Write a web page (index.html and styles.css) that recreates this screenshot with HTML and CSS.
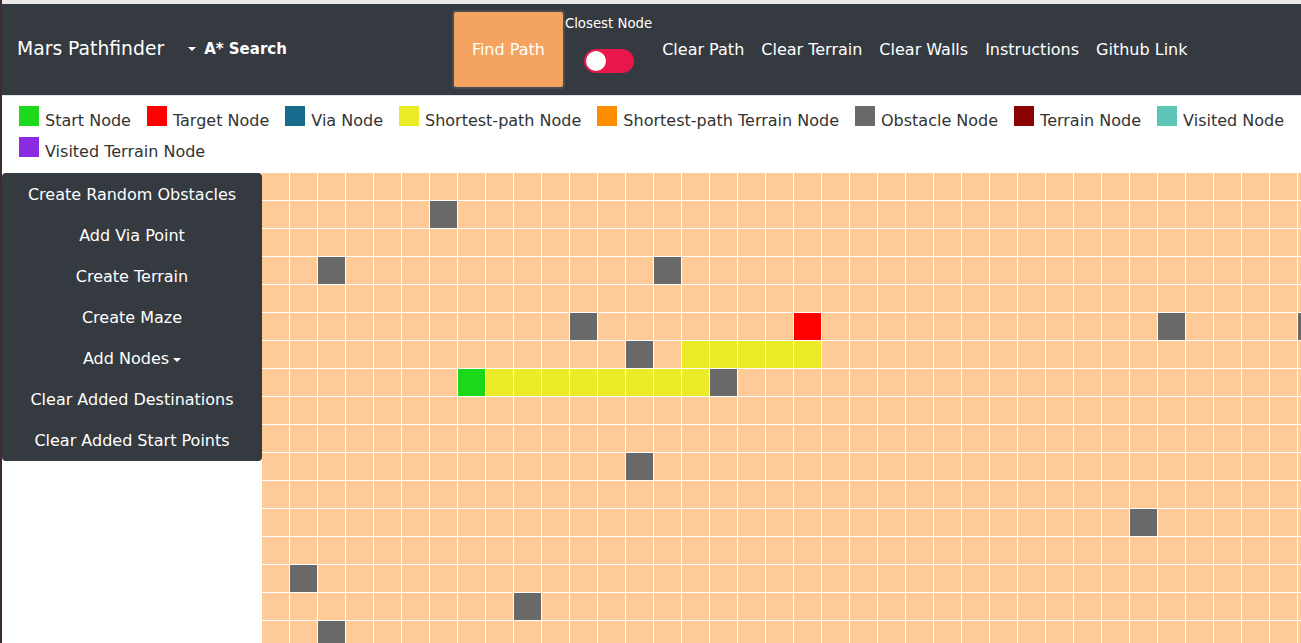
FILE: index.html
```html
<!DOCTYPE html>
<html lang="en">
<head>
<meta charset="utf-8">
<title>Mars Pathfinder</title>
<link rel="stylesheet" href="styles.css">
</head>
<body>
<div class="topbar"></div>
<nav class="navbar">
  <span class="brand">Mars Pathfinder</span>
  <div class="algo"><span class="caret"></span><span class="algo-label">A* Search</span></div>
  <button class="find-btn">Find Path</button>
  <div class="closest">
    <span class="closest-label">Closest Node</span>
    <span class="toggle"><span class="knob"></span></span>
  </div>
  <div class="links">
    <a class="link">Clear Path</a>
    <a class="link">Clear Terrain</a>
    <a class="link">Clear Walls</a>
    <a class="link">Instructions</a>
    <a class="link">Github Link</a>
  </div>
</nav>
<div class="legend">
  <div class="legend-item"><span class="swatch sw-start"></span>Start Node</div>
  <div class="legend-item"><span class="swatch sw-target"></span>Target Node</div>
  <div class="legend-item"><span class="swatch sw-via"></span>Via Node</div>
  <div class="legend-item"><span class="swatch sw-path"></span>Shortest-path Node</div>
  <div class="legend-item"><span class="swatch sw-pterrain"></span>Shortest-path Terrain Node</div>
  <div class="legend-item"><span class="swatch sw-obstacle"></span>Obstacle Node</div>
  <div class="legend-item"><span class="swatch sw-terrain"></span>Terrain Node</div>
  <div class="legend-item"><span class="swatch sw-visited"></span>Visited Node</div>
  <div class="legend-item"><span class="swatch sw-vterrain"></span>Visited Terrain Node</div>
</div>
<div class="main">
  <div class="sidebar">
    <div class="side-item">Create Random Obstacles</div>
    <div class="side-item">Add Via Point</div>
    <div class="side-item">Create Terrain</div>
    <div class="side-item">Create Maze</div>
    <div class="side-item">Add Nodes<span class="caret small"></span></div>
    <div class="side-item">Clear Added Destinations</div>
    <div class="side-item">Clear Added Start Points</div>
  </div>
  <div class="grid">
    <!-- row 0 -->
    <span></span><span></span><span></span><span></span><span></span><span></span><span></span><span></span><span></span><span></span>
    <span></span><span></span><span></span><span></span><span></span><span></span><span></span><span></span><span></span><span></span>
    <span></span><span></span><span></span><span></span><span></span><span></span><span></span><span></span><span></span><span></span>
    <span></span><span></span><span></span><span></span><span></span><span></span><span></span><span></span>
    <!-- row 1: obstacle at 6 -->
    <span></span><span></span><span></span><span></span><span></span><span></span><span class="o"></span><span></span><span></span><span></span>
    <span></span><span></span><span></span><span></span><span></span><span></span><span></span><span></span><span></span><span></span>
    <span></span><span></span><span></span><span></span><span></span><span></span><span></span><span></span><span></span><span></span>
    <span></span><span></span><span></span><span></span><span></span><span></span><span></span><span></span>
    <!-- row 2 -->
    <span></span><span></span><span></span><span></span><span></span><span></span><span></span><span></span><span></span><span></span>
    <span></span><span></span><span></span><span></span><span></span><span></span><span></span><span></span><span></span><span></span>
    <span></span><span></span><span></span><span></span><span></span><span></span><span></span><span></span><span></span><span></span>
    <span></span><span></span><span></span><span></span><span></span><span></span><span></span><span></span>
    <!-- row 3: obstacles at 2, 14 -->
    <span></span><span></span><span class="o"></span><span></span><span></span><span></span><span></span><span></span><span></span><span></span>
    <span></span><span></span><span></span><span></span><span class="o"></span><span></span><span></span><span></span><span></span><span></span>
    <span></span><span></span><span></span><span></span><span></span><span></span><span></span><span></span><span></span><span></span>
    <span></span><span></span><span></span><span></span><span></span><span></span><span></span><span></span>
    <!-- row 4 -->
    <span></span><span></span><span></span><span></span><span></span><span></span><span></span><span></span><span></span><span></span>
    <span></span><span></span><span></span><span></span><span></span><span></span><span></span><span></span><span></span><span></span>
    <span></span><span></span><span></span><span></span><span></span><span></span><span></span><span></span><span></span><span></span>
    <span></span><span></span><span></span><span></span><span></span><span></span><span></span><span></span>
    <!-- row 5: obstacle 11, target 19, obstacle 32, obstacle 37 -->
    <span></span><span></span><span></span><span></span><span></span><span></span><span></span><span></span><span></span><span></span>
    <span></span><span class="o"></span><span></span><span></span><span></span><span></span><span></span><span></span><span></span><span class="t"></span>
    <span></span><span></span><span></span><span></span><span></span><span></span><span></span><span></span><span></span><span></span>
    <span></span><span></span><span class="o"></span><span></span><span></span><span></span><span></span><span class="o"></span>
    <!-- row 6: obstacle 13, path 15-19 -->
    <span></span><span></span><span></span><span></span><span></span><span></span><span></span><span></span><span></span><span></span>
    <span></span><span></span><span></span><span class="o"></span><span></span><span class="p"></span><span class="p"></span><span class="p"></span><span class="p"></span><span class="p"></span>
    <span></span><span></span><span></span><span></span><span></span><span></span><span></span><span></span><span></span><span></span>
    <span></span><span></span><span></span><span></span><span></span><span></span><span></span><span></span>
    <!-- row 7: start 7, path 8-15, obstacle 16 -->
    <span></span><span></span><span></span><span></span><span></span><span></span><span></span><span class="s"></span><span class="p"></span><span class="p"></span>
    <span class="p"></span><span class="p"></span><span class="p"></span><span class="p"></span><span class="p"></span><span class="p"></span><span class="o"></span><span></span><span></span><span></span>
    <span></span><span></span><span></span><span></span><span></span><span></span><span></span><span></span><span></span><span></span>
    <span></span><span></span><span></span><span></span><span></span><span></span><span></span><span></span>
    <!-- row 8 -->
    <span></span><span></span><span></span><span></span><span></span><span></span><span></span><span></span><span></span><span></span>
    <span></span><span></span><span></span><span></span><span></span><span></span><span></span><span></span><span></span><span></span>
    <span></span><span></span><span></span><span></span><span></span><span></span><span></span><span></span><span></span><span></span>
    <span></span><span></span><span></span><span></span><span></span><span></span><span></span><span></span>
    <!-- row 9 -->
    <span></span><span></span><span></span><span></span><span></span><span></span><span></span><span></span><span></span><span></span>
    <span></span><span></span><span></span><span></span><span></span><span></span><span></span><span></span><span></span><span></span>
    <span></span><span></span><span></span><span></span><span></span><span></span><span></span><span></span><span></span><span></span>
    <span></span><span></span><span></span><span></span><span></span><span></span><span></span><span></span>
    <!-- row 10: obstacle 13 -->
    <span></span><span></span><span></span><span></span><span></span><span></span><span></span><span></span><span></span><span></span>
    <span></span><span></span><span></span><span class="o"></span><span></span><span></span><span></span><span></span><span></span><span></span>
    <span></span><span></span><span></span><span></span><span></span><span></span><span></span><span></span><span></span><span></span>
    <span></span><span></span><span></span><span></span><span></span><span></span><span></span><span></span>
    <!-- row 11 -->
    <span></span><span></span><span></span><span></span><span></span><span></span><span></span><span></span><span></span><span></span>
    <span></span><span></span><span></span><span></span><span></span><span></span><span></span><span></span><span></span><span></span>
    <span></span><span></span><span></span><span></span><span></span><span></span><span></span><span></span><span></span><span></span>
    <span></span><span></span><span></span><span></span><span></span><span></span><span></span><span></span>
    <!-- row 12: obstacle 31 -->
    <span></span><span></span><span></span><span></span><span></span><span></span><span></span><span></span><span></span><span></span>
    <span></span><span></span><span></span><span></span><span></span><span></span><span></span><span></span><span></span><span></span>
    <span></span><span></span><span></span><span></span><span></span><span></span><span></span><span></span><span></span><span></span>
    <span></span><span class="o"></span><span></span><span></span><span></span><span></span><span></span><span></span>
    <!-- row 13 -->
    <span></span><span></span><span></span><span></span><span></span><span></span><span></span><span></span><span></span><span></span>
    <span></span><span></span><span></span><span></span><span></span><span></span><span></span><span></span><span></span><span></span>
    <span></span><span></span><span></span><span></span><span></span><span></span><span></span><span></span><span></span><span></span>
    <span></span><span></span><span></span><span></span><span></span><span></span><span></span><span></span>
    <!-- row 14: obstacle 1 -->
    <span></span><span class="o"></span><span></span><span></span><span></span><span></span><span></span><span></span><span></span><span></span>
    <span></span><span></span><span></span><span></span><span></span><span></span><span></span><span></span><span></span><span></span>
    <span></span><span></span><span></span><span></span><span></span><span></span><span></span><span></span><span></span><span></span>
    <span></span><span></span><span></span><span></span><span></span><span></span><span></span><span></span>
    <!-- row 15: obstacle 9 -->
    <span></span><span></span><span></span><span></span><span></span><span></span><span></span><span></span><span></span><span class="o"></span>
    <span></span><span></span><span></span><span></span><span></span><span></span><span></span><span></span><span></span><span></span>
    <span></span><span></span><span></span><span></span><span></span><span></span><span></span><span></span><span></span><span></span>
    <span></span><span></span><span></span><span></span><span></span><span></span><span></span><span></span>
    <!-- row 16: obstacle 2 -->
    <span></span><span></span><span class="o"></span><span></span><span></span><span></span><span></span><span></span><span></span><span></span>
    <span></span><span></span><span></span><span></span><span></span><span></span><span></span><span></span><span></span><span></span>
    <span></span><span></span><span></span><span></span><span></span><span></span><span></span><span></span><span></span><span></span>
    <span></span><span></span><span></span><span></span><span></span><span></span><span></span><span></span>
  </div>
</div>
</body>
</html>
```
FILE: styles.css
```css
html, body {
  margin: 0;
  height: 100%;
  overflow: hidden;
}
body {
  font-family: "DejaVu Sans", "Noto Sans", sans-serif;
  background: #fff;
  border-left: 2px solid #3d2c2e;
}
.topbar {
  height: 4px;
  background: #e9e9e9;
}
.navbar {
  height: 91px;
  background: #343a40;
  border-bottom: 1px solid #dfe2e6;
  display: flex;
  align-items: center;
  padding-left: 15px;
  color: #fff;
  font-size: 15px;
}
.brand {
  font-size: 18.75px;
  line-height: 28px;
  margin-top: -1px;
}
.algo {
  display: flex;
  align-items: center;
  margin-left: 24px;
  margin-top: -1px;
}
.caret {
  display: inline-block;
  width: 0;
  height: 0;
  border-top: 4px solid #fff;
  border-left: 4px solid transparent;
  border-right: 4px solid transparent;
  margin-right: 8px;
}
.caret.small {
  margin-right: 0;
  margin-left: 4px;
  vertical-align: middle;
}
.algo-label {
  font-size: 15px;
  font-weight: bold;
}
.find-btn {
  margin-left: 165px;
  width: 113px;
  height: 79px;
  box-sizing: border-box;
  border: 2px solid #484d54;
  border-radius: 4px;
  background: #f4a460;
  color: #fff;
  font-family: "DejaVu Sans", sans-serif;
  font-size: 16px;
  padding: 0;
}
.closest {
  align-self: flex-start;
  margin-top: 12px;
  display: flex;
  flex-direction: column;
  align-items: center;
}
.closest-label {
  font-size: 13.3px;
  line-height: 16px;
}
.toggle {
  margin-top: 17px;
  width: 50px;
  height: 24px;
  box-sizing: border-box;
  border-radius: 12px;
  background: #e8164a;
  display: flex;
  align-items: center;
  padding: 0 2px;
}
.knob {
  width: 20px;
  height: 20px;
  border-radius: 50%;
  background: #fff;
}
.links {
  display: flex;
  gap: 17px;
  margin-left: 10px;
  font-size: 16px;
}
.link {
  color: #fff;
}
.legend {
  display: flex;
  flex-wrap: wrap;
  column-gap: 16px;
  padding: 9px 0 6px 17px;
  font-size: 16px;
  line-height: 31px;
  color: #333;
}
.swatch {
  display: inline-block;
  width: 20px;
  height: 20px;
  vertical-align: baseline;
  margin-right: 6px;
}
.sw-start { background: #1dd81b; }
.sw-target { background: #ff0000; }
.sw-via { background: #176b8d; }
.sw-path { background: #ebeb28; }
.sw-pterrain { background: #ff8c00; }
.sw-obstacle { background: #696969; }
.sw-terrain { background: #8b0000; }
.sw-visited { background: #5bc5b8; }
.sw-vterrain { background: #8a2be2; }
.main {
  display: flex;
  align-items: flex-start;
  overflow: hidden;
}
.sidebar {
  flex: none;
  width: 260px;
  padding-top: 1px;
  background: #343a40;
  border-radius: 4px;
  color: #fff;
  font-size: 16px;
}
.side-item {
  height: 41px;
  line-height: 41px;
  text-align: center;
}
.grid {
  flex: none;
  display: grid;
  grid-template-columns: repeat(38, 28px);
  grid-auto-rows: 28px;
}
.grid span {
  box-sizing: border-box;
  background: #fecb98;
  border-right: 1px solid #fff;
  border-bottom: 1px solid #fff;
}
.grid .o { background: #696969; }
.grid .t { background: #ff0000; }
.grid .s { background: #1bd81b; }
.grid .p { background: #ebeb28; }
```
